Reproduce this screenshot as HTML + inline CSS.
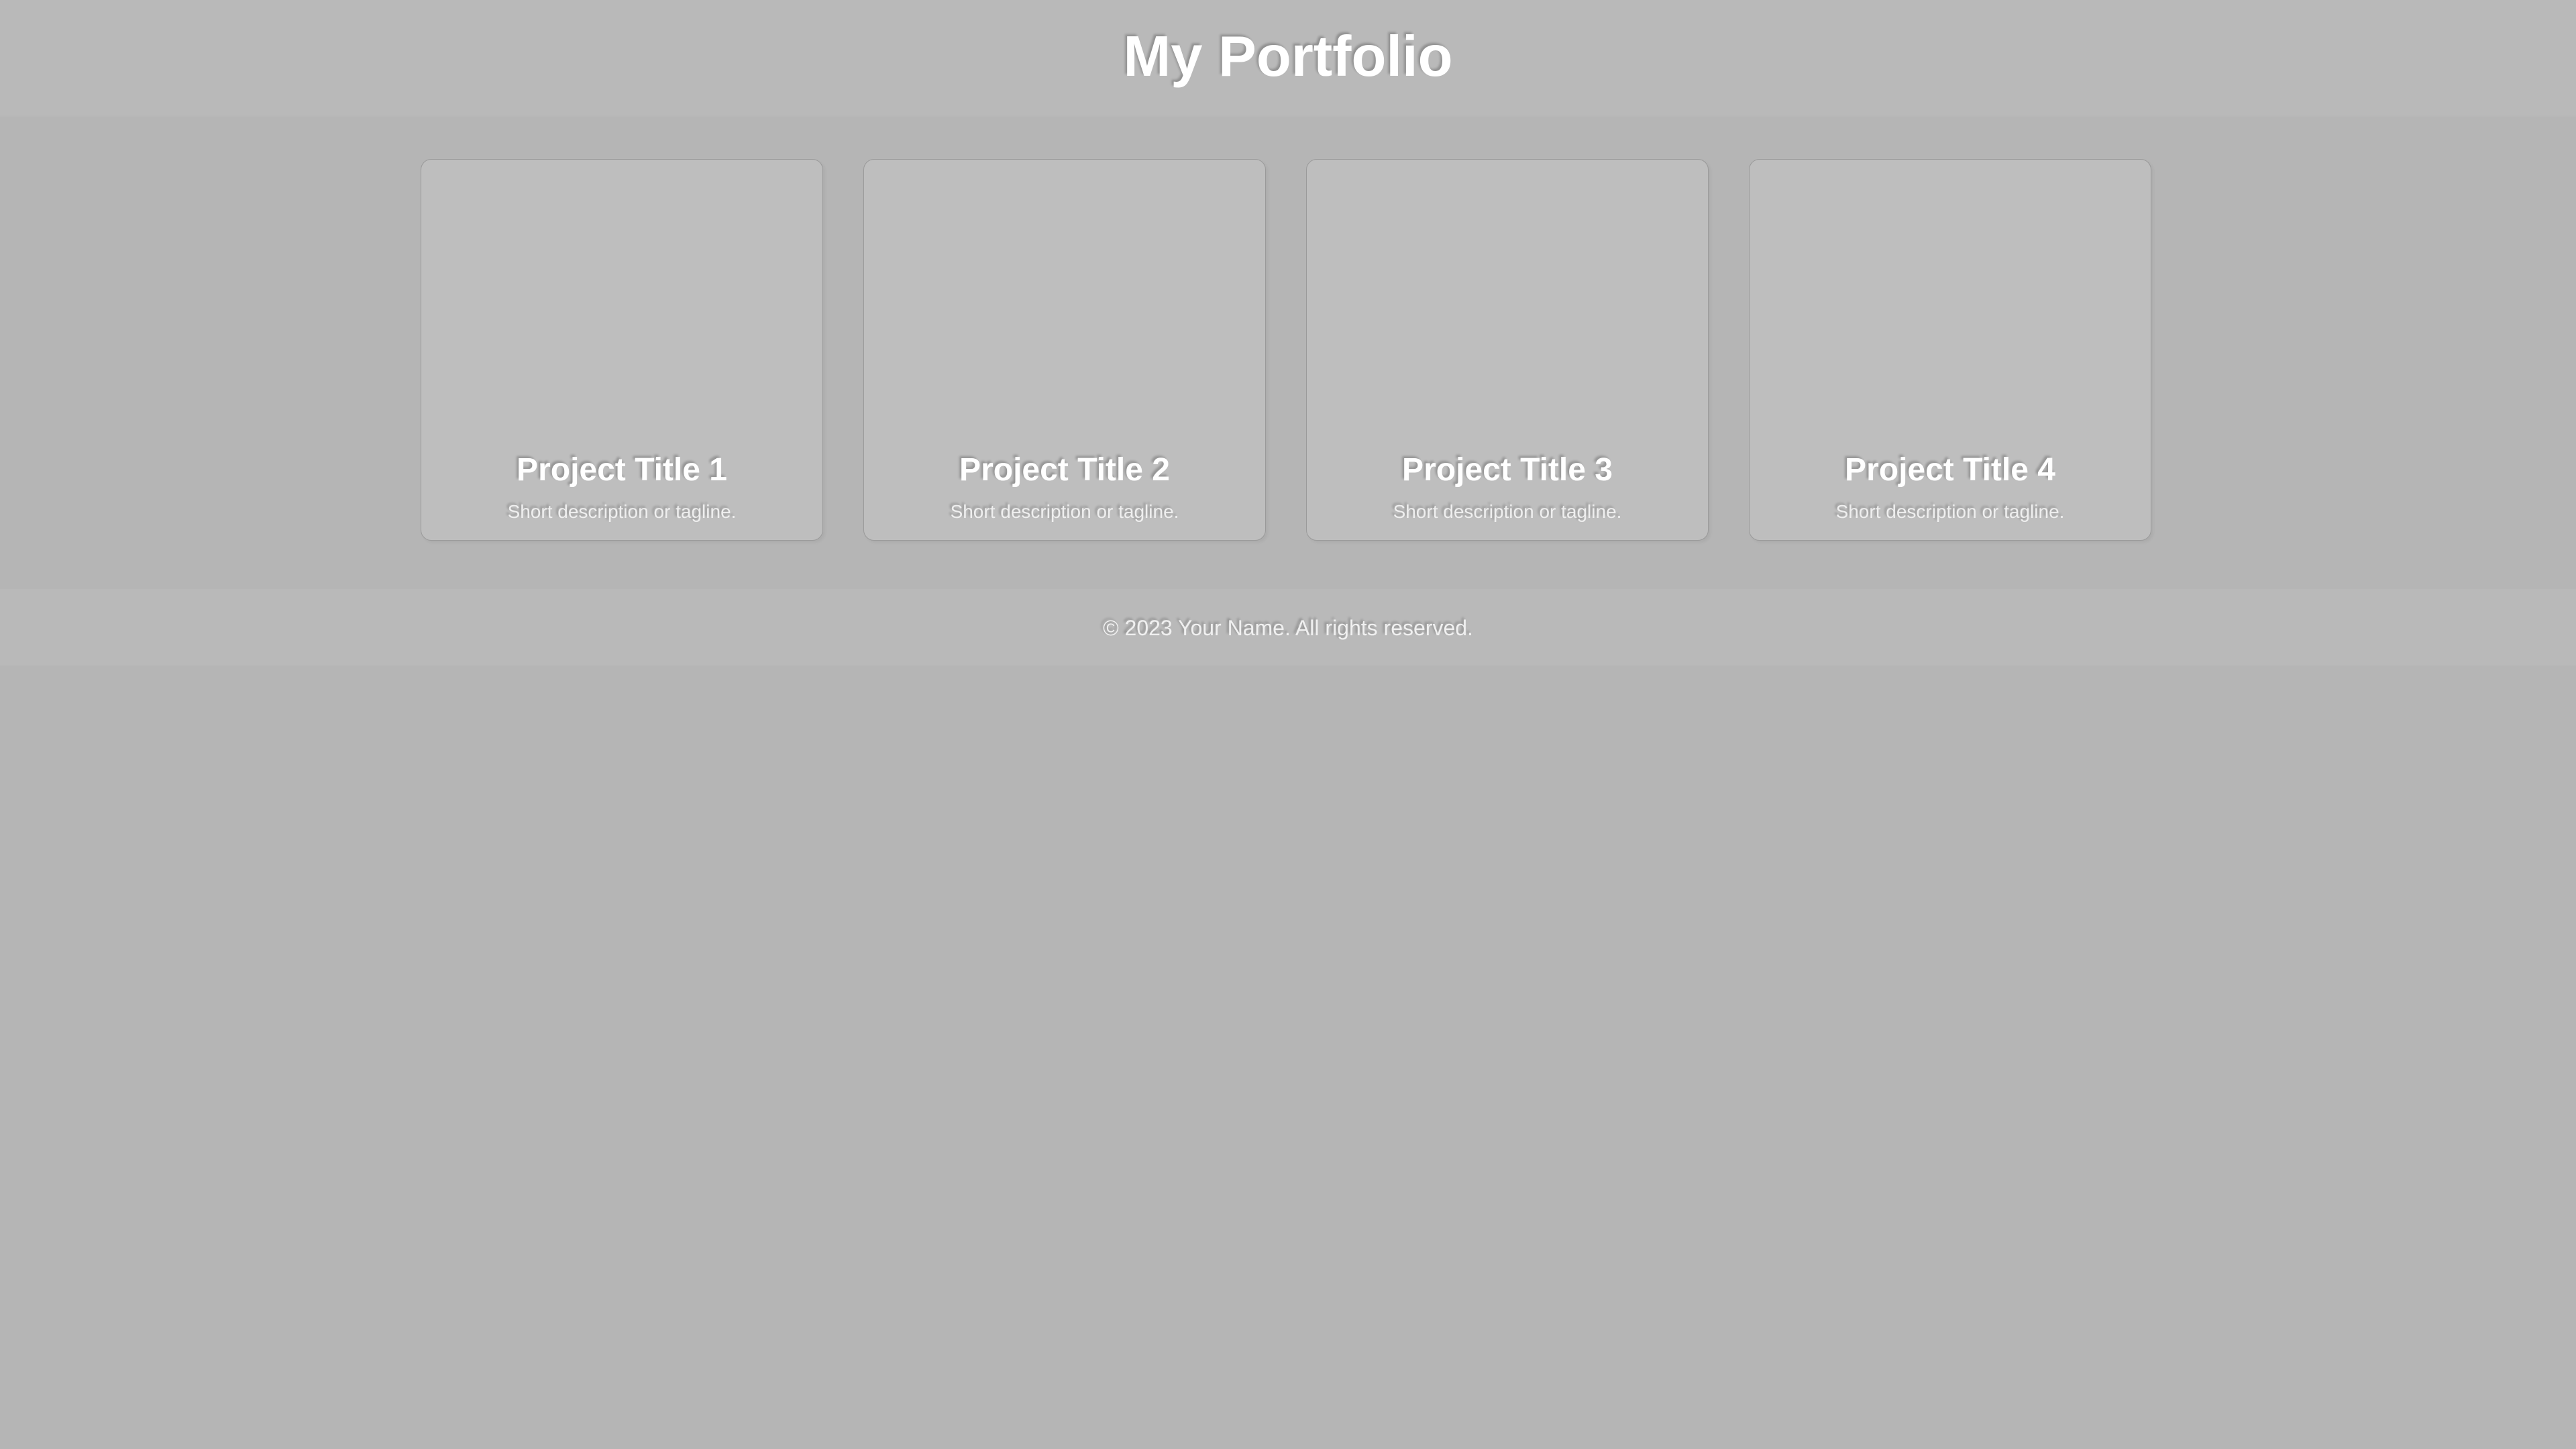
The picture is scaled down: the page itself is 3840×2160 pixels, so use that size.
<!DOCTYPE html>
<html><head><meta charset="utf-8"><style>
html,body{margin:0;padding:0}
body{width:3840px;height:2160px;background:#b5b5b5;font-family:"Liberation Sans",Arial,sans-serif;position:relative;overflow:hidden}
header{position:absolute;left:0;top:0;width:3840px;height:172px;background:#b9b9b9;border-bottom:2px solid #b7b7b7}
h1{margin:0;position:absolute;left:0;width:3840px;top:38px;text-align:center;font-size:85px;line-height:94px;font-weight:bold;color:#fff;text-shadow:-3px -3px 3px rgba(0,0,0,.22)}
.card{position:absolute;top:237px;width:598px;height:567px;background:#bebebe;border:1px solid #9a9a9a;border-radius:16px;box-shadow:3px 3px 4px rgba(0,0,0,.05)}
.t{position:absolute;left:0;width:100%;text-align:center;color:#fff;font-weight:bold;font-size:48px;line-height:56px;top:435px;text-shadow:-3px -3px 3px rgba(0,0,0,.22)}
.d{position:absolute;left:0;width:100%;text-align:center;color:#efefef;font-size:28px;line-height:32px;top:509px;text-shadow:-3px -3px 3px rgba(0,0,0,.22)}
footer{position:absolute;left:0;top:878px;width:3840px;height:114px;background:#b9b9b9}
footer p{margin:0;position:absolute;left:0;width:100%;text-align:center;top:40px;font-size:32px;line-height:36px;color:#f0f0f0;text-shadow:-3px -3px 3px rgba(0,0,0,.22)}
</style></head><body>
<header><h1>My Portfolio</h1></header>
<div class="card" style="left:627px"><div class="t">Project Title 1</div><div class="d">Short description or tagline.</div></div>
<div class="card" style="left:1287px"><div class="t">Project Title 2</div><div class="d">Short description or tagline.</div></div>
<div class="card" style="left:1947px"><div class="t">Project Title 3</div><div class="d">Short description or tagline.</div></div>
<div class="card" style="left:2607px"><div class="t">Project Title 4</div><div class="d">Short description or tagline.</div></div>
<footer><p>© 2023 Your Name. All rights reserved.</p></footer>
</body></html>
